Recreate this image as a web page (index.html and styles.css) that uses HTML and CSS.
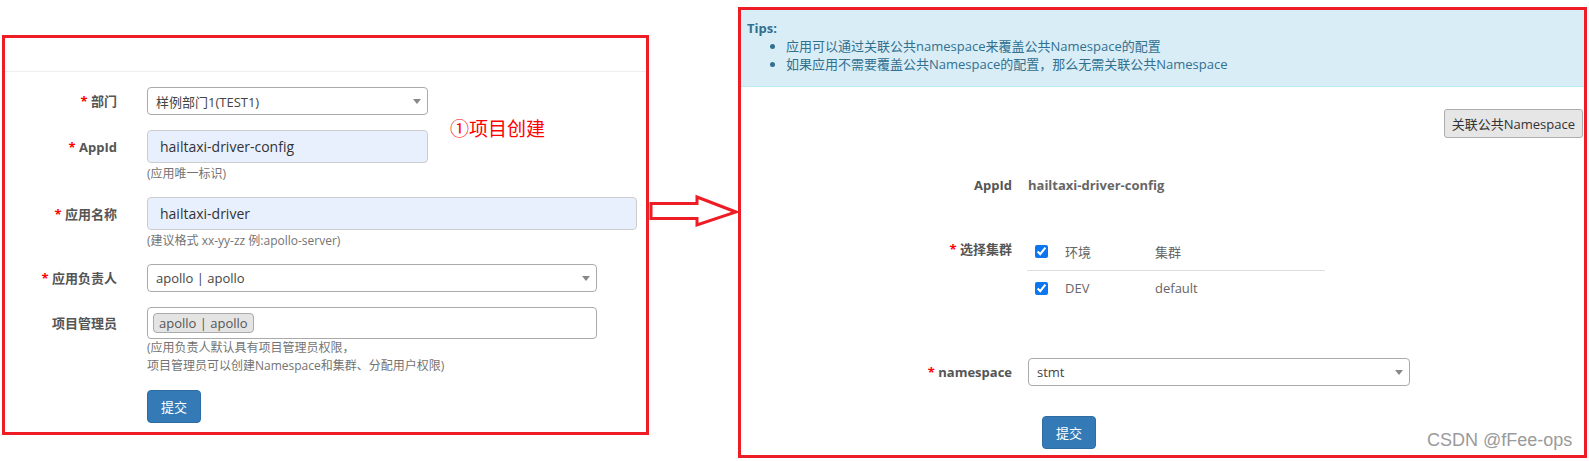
FILE: index.html
```html
<!DOCTYPE html>
<html lang="zh-CN">
<head>
  <meta charset="UTF-8">
  <title>项目创建</title>
  <link rel="stylesheet" href="styles.css">
</head>
<body>

  <div class="left-panel">
    <div class="panel-head"></div>

    <div class="form">
      <div class="row">
        <label class="label"><span class="star">*</span> 部门</label>
        <div class="select w-dept"><span>样例部门1(TEST1)</span><span class="caret"></span></div>
      </div>

      <div class="row">
        <label class="label"><span class="star">*</span> AppId</label>
        <div class="input w-dept">hailtaxi-driver-config</div>
        <div class="help">(应用唯一标识)</div>
      </div>

      <div class="row">
        <label class="label"><span class="star">*</span> 应用名称</label>
        <div class="input w-name">hailtaxi-driver</div>
        <div class="help">(建议格式 xx-yy-zz 例:apollo-server)</div>
      </div>

      <div class="row">
        <label class="label"><span class="star">*</span> 应用负责人</label>
        <div class="select w-owner"><span>apollo | apollo</span><span class="caret"></span></div>
      </div>

      <div class="row">
        <label class="label">项目管理员</label>
        <div class="tagbox w-owner"><span class="tag">apollo | apollo</span></div>
        <div class="help help2">(应用负责人默认具有项目管理员权限，<br>项目管理员可以创建Namespace和集群、分配用户权限)</div>
      </div>

      <div class="row">
        <span></span>
        <button class="btn-primary">提交</button>
      </div>
    </div>

    <span class="note">①项目创建</span>
  </div>

  <svg class="arrow" width="89" height="32" viewBox="0 0 89 32">
    <polygon points="2,8.5 48,8.5 48,2 87,17 48,30 48,23.5 2,23.5" fill="#fff" stroke="#ee1c25" stroke-width="3"/>
  </svg>

  <div class="right-panel">
    <div class="tips">
      <div class="tips-title">Tips:</div>
      <ul>
        <li>应用可以通过关联公共namespace来覆盖公共Namespace的配置</li>
        <li>如果应用不需要覆盖公共Namespace的配置，那么无需关联公共Namespace</li>
      </ul>
    </div>

    <div class="tools">
      <button class="btn-default">关联公共Namespace</button>
    </div>

    <div class="rrow appid-row">
      <label class="label">AppId</label>
      <div class="appid-value">hailtaxi-driver-config</div>
    </div>

    <div class="rrow cluster-row">
      <label class="label top"><span class="star">*</span> 选择集群</label>
      <div class="cluster-table">
        <div class="trow thead">
          <input type="checkbox" checked>
          <span>环境</span>
          <span>集群</span>
        </div>
        <div class="trow">
          <input type="checkbox" checked>
          <span>DEV</span>
          <span>default</span>
        </div>
      </div>
    </div>

    <div class="rrow ns-row">
      <label class="label"><span class="star">*</span> namespace</label>
      <div class="select w-ns"><span>stmt</span><span class="caret"></span></div>
    </div>

    <div class="rrow submit-row">
      <span></span>
      <button class="btn-primary">提交</button>
    </div>
  </div>

  <div class="watermark">CSDN @fFee-ops</div>

</body>
</html>
```

FILE: styles.css
```css
body{
  margin: 0;
  display: flex;
  align-items: flex-start;
  font-family: "Open Sans", "Noto Sans CJK SC", sans-serif;
  font-size: 13px;
  color: #333;
  background: #fff;
}

/* left screenshot */

.left-panel{
  position: relative;
  box-sizing: border-box;
  width: 647px;
  height: 400px;
  margin: 35px 0 0 2px;
  border: 3px solid #ee1c25;
}

.panel-head{
  height: 33px;
  border-bottom: 1px solid #eee;
}

.form{
  display: flex;
  flex-direction: column;
  gap: 15px;
  padding-top: 15px;
}

.row{
  display: grid;
  grid-template-columns: 112px auto;
  column-gap: 30px;
  align-items: center;
}

.label{
  text-align: right;
  font-weight: 700;
  color: #555;
  line-height: 18px;
}

.star{
  color: #f00;
}

.select{
  box-sizing: border-box;
  height: 28px;
  display: flex;
  align-items: center;
  justify-content: space-between;
  padding: 0 6px 0 8px;
  border: 1px solid #aaa;
  border-radius: 4px;
  background: #fff;
  color: #444;
}

.caret{
  border-left: 4px solid transparent;
  border-right: 4px solid transparent;
  border-top: 5px solid #888;
}

.input{
  box-sizing: border-box;
  height: 33px;
  display: flex;
  align-items: center;
  padding-left: 12px;
  border: 1px solid #ccc;
  border-radius: 4px;
  background: #e8f0fe;
  font-size: 14px;
  color: #333;
}

.w-dept{ width: 281px; }
.w-name{ width: 490px; }
.w-owner{ width: 450px; }
.w-ns{ width: 382px; }

.help{
  grid-column: 2;
  margin-top: 3px;
  font-size: 12px;
  line-height: 16px;
  color: #737373;
}

.help2{
  margin-top: 0;
  line-height: 18px;
}

.tagbox{
  box-sizing: border-box;
  height: 32px;
  display: flex;
  align-items: center;
  padding-left: 5px;
  border: 1px solid #aaa;
  border-radius: 4px;
}

.tag{
  padding: 0 5px;
  line-height: 18px;
  background: #e4e4e4;
  border: 1px solid #aaa;
  border-radius: 4px;
  color: #555;
}

.btn-primary{
  width: 54px;
  height: 33px;
  padding: 0;
  background: #337ab7;
  border: 1px solid #2e6da4;
  border-radius: 4px;
  color: #fff;
  font-family: inherit;
  font-size: 13px;
}

.note{
  position: absolute;
  left: 445px;
  top: 76px;
  font-size: 19px;
  color: #f00;
}

.arrow{
  margin-top: 195px;
  overflow: visible;
}

/* right screenshot */

.right-panel{
  box-sizing: border-box;
  width: 849px;
  height: 451px;
  margin-top: 7px;
  border: 3px solid #ee1c25;
}

.tips{
  padding: 9px 6px 13px;
  background: #d9edf7;
  border-bottom: 1px solid #bce8f1;
  color: #31708f;
  line-height: 18px;
}

.tips-title{
  font-weight: 700;
}

.tips ul{
  margin: 0;
  padding-left: 39px;
}

.tools{
  display: flex;
  justify-content: flex-end;
  margin-top: 22px;
  padding-right: 1px;
}

.btn-default{
  height: 29px;
  padding: 0 7px;
  background: #e6e6e6;
  border: 1px solid #adadad;
  border-radius: 3px;
  color: #333;
  font-family: inherit;
  font-size: 13px;
}

.rrow{
  display: grid;
  grid-template-columns: 271px auto;
  column-gap: 16px;
  align-items: center;
}

.appid-row{
  margin-top: 38px;
}

.appid-value{
  font-weight: 700;
  color: #666;
  line-height: 18px;
}

.cluster-row{
  margin-top: 39px;
  align-items: start;
}

.label.top{
  padding-top: 7px;
}

.cluster-table{
  width: 298px;
  margin-left: -1px;
}

.trow{
  display: grid;
  grid-template-columns: 30px 90px 1fr;
  align-items: center;
  height: 34px;
  padding-left: 8px;
  color: #666;
}

.trow input{
  width: 13px;
  height: 13px;
  margin: 0;
  accent-color: #0b76ef;
}

.thead{
  height: 37px;
  border-bottom: 1px solid #ddd;
}

.ns-row{
  margin-top: 53px;
}

.submit-row{
  margin-top: 30px;
}

.submit-row .btn-primary{
  margin-left: 14px;
}

.watermark{
  position: absolute;
  left: 1427px;
  top: 430px;
  font-family: "Liberation Sans", Arial, sans-serif;
  font-size: 18px;
  color: #9a9a9a;
}
```
